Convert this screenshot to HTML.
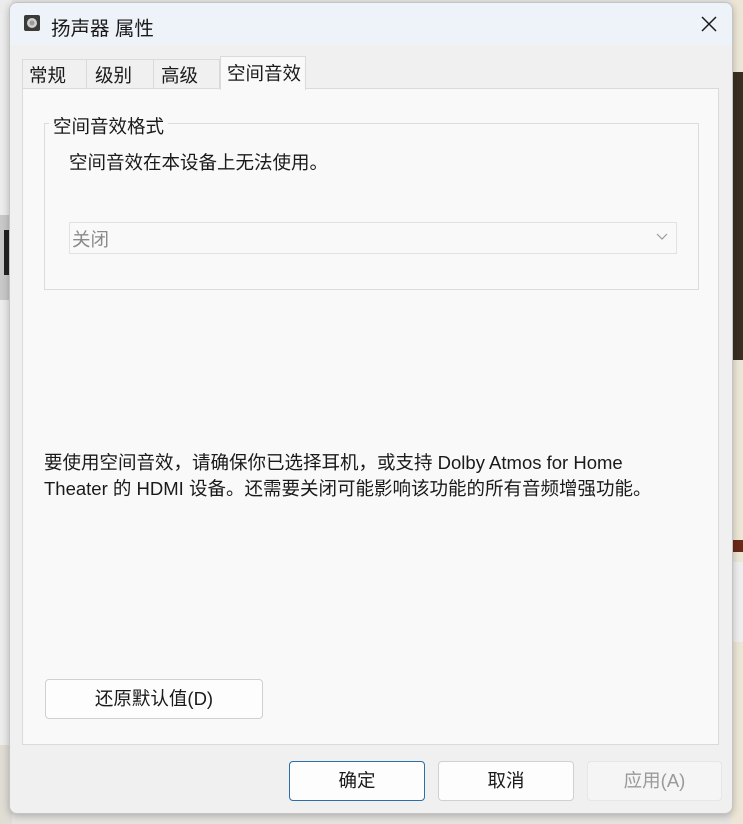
<!DOCTYPE html><html><head><meta charset="utf-8"><style>
*{margin:0;padding:0;box-sizing:border-box}
body{width:743px;height:824px;overflow:hidden;position:relative;background:#e6e4e0;font-family:"Liberation Sans","Noto Sans CJK SC",sans-serif;color:#1a1a1a}
.a{position:absolute}
.t{font-size:18.5px;white-space:nowrap}
.btn{position:absolute;background:#fdfdfd;border:1px solid #d0d0d0;border-radius:4px;font-size:18.5px;text-align:center;line-height:37px}
</style></head><body>
<div class="a" style="left:0;top:0;width:12px;height:824px;background:#ececec"></div>
<div class="a" style="left:0;top:215px;width:12px;height:85px;background:#c9c9c9"></div>
<div class="a" style="left:4px;top:230px;width:6px;height:45px;background:#222"></div>
<div class="a" style="left:0;top:745px;width:12px;height:79px;background:#e0ddd5"></div>
<div class="a" style="left:731px;top:0;width:12px;height:824px;background:#ede6d6"></div>
<div class="a" style="left:731px;top:72px;width:12px;height:288px;background:#3a2f22"></div>
<div class="a" style="left:731px;top:540px;width:12px;height:12px;background:#6b2a18"></div>
<div class="a" style="left:731px;top:562px;width:12px;height:80px;background:#efefef"></div>
<div class="a" style="left:9px;top:2px;width:724px;height:812px;background:#f0f0f0;border-radius:8px;border:1px solid #c4c4c4;overflow:hidden;box-shadow:0 2px 8px rgba(0,0,0,.25)">
 <div class="a" style="left:0;top:0;width:723px;height:42px;background:#eef2f9"></div>
 <svg class="a" style="left:13px;top:11px" width="18" height="18"><rect x="1" y="1" width="16" height="16" rx="2" fill="#3a3a3a"/><circle cx="9" cy="9" r="5" fill="#cfcfcf"/><circle cx="9" cy="9" r="2.5" fill="#9a9a9a"/></svg>
 <div class="a t" style="left:41px;top:9px;font-size:19.5px">扬声器 属性</div>
 <svg class="a" style="left:690px;top:12px" width="18" height="18"><path d="M2 2L16 16M16 2L2 16" stroke="#1a1a1a" stroke-width="1.5"/></svg>
 <div class="a" style="left:12px;top:56px;width:65px;height:30px;border:1px solid #dadada;border-bottom:none;background:#f0f0f0"></div>
 <div class="a t" style="left:19px;top:59px">常规</div>
 <div class="a" style="left:77px;top:56px;width:67px;height:30px;border:1px solid #dadada;border-bottom:none;border-left:none"></div>
 <div class="a t" style="left:85px;top:59px">级别</div>
 <div class="a" style="left:144px;top:56px;width:66px;height:30px;border:1px solid #dadada;border-bottom:none;border-left:none"></div>
 <div class="a t" style="left:151px;top:59px">高级</div>
 <div class="a" style="left:12px;top:85px;width:697px;height:657px;background:#f9f9f9;border:1px solid #dadada"></div>
 <div class="a" style="left:210px;top:53px;width:86px;height:34px;background:#f9f9f9;border:1px solid #dadada;border-bottom:none"></div>
 <div class="a t" style="left:217px;top:57px">空间音效</div>
 <div class="a" style="left:34px;top:120px;width:655px;height:167px;border:1px solid #dcdcdc"></div>
 <div class="a t" style="left:39px;top:110px;background:#f9f9f9;padding:0 4px">空间音效格式</div>
 <div class="a t" style="left:59px;top:146px">空间音效在本设备上无法使用。</div>
 <div class="a" style="left:59px;top:219px;width:608px;height:32px;border:1px solid #e2e2e2;background:#f9f9f9"></div>
 <div class="a t" style="left:62px;top:223px;color:#8a8a8a">关闭</div>
 <svg class="a" style="left:646px;top:230px" width="12" height="8"><path d="M1 1L6 6L11 1" stroke="#9a9a9a" fill="none" stroke-width="1.2"/></svg>
 <div class="a t" style="left:34px;top:447px;line-height:26px">要使用空间音效，请确保你已选择耳机，或支持 Dolby Atmos for Home<br>Theater 的 HDMI 设备。还需要关闭可能影响该功能的所有音频增强功能。</div>
 <div class="btn" style="left:35px;top:676px;width:218px;height:40px">还原默认值(D)</div>
 <div class="btn" style="left:279px;top:758px;width:136px;height:40px;border-color:#2b6eaa">确定</div>
 <div class="btn" style="left:428px;top:758px;width:136px;height:40px">取消</div>
 <div class="btn" style="left:577px;top:758px;width:135px;height:40px;background:#f5f5f5;border-color:#e6e6e6;color:#9a9a9a">应用(A)</div>
</div>
</body></html>
